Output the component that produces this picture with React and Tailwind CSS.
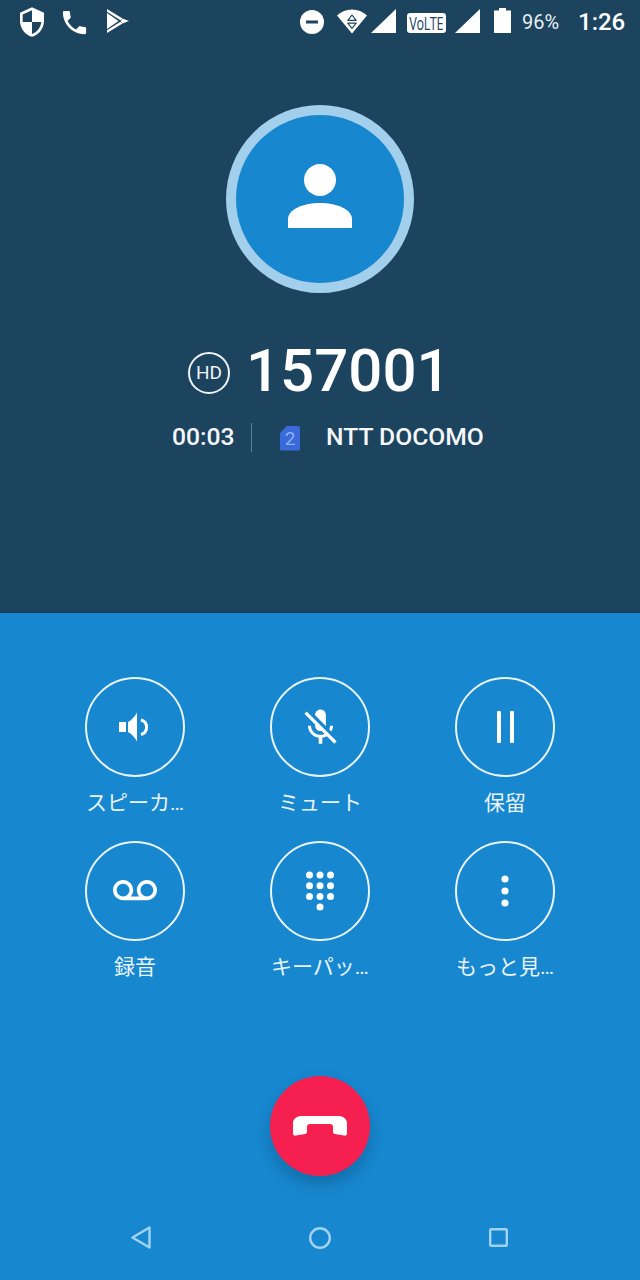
const cjk = { fontFamily: 'Roboto, "Noto Sans CJK JP", sans-serif' };
const dark = '#1c445f';

function StatusBar() {
  return (
    <div className="flex h-[44px] items-center text-white">
      <svg width="32" height="32" viewBox="0 0 24 24" className="ml-[16px]">
        <path fill="#fff" d="M12 1L3 5v6c0 5.55 3.84 10.74 9 12 5.16-1.26 9-6.45 9-12V5l-9-4zm0 10.99h7c-.53 4.12-3.28 7.79-7 8.94V12H5V6.3l7-3.11v8.8z" />
      </svg>
      <svg width="31" height="31" viewBox="0 0 24 24" className="ml-[11px]">
        <path fill="#fff" d="M6.62 10.79c1.44 2.83 3.76 5.14 6.59 6.59l2.2-2.2c.27-.27.67-.36 1.02-.24 1.12.37 2.33.57 3.57.57.55 0 1 .45 1 1V20c0 .55-.45 1-1 1-9.39 0-17-7.61-17-17 0-.55.45-1 1-1h3.5c.55 0 1 .45 1 1 0 1.25.2 2.45.57 3.57.11.35.03.74-.25 1.02l-2.2 2.2z" />
      </svg>
      <svg width="22" height="28" viewBox="0 0 22 28" className="ml-[17px]">
        <path fill="#fff" d="M0 1 L15.5 10.5 L13.4 12.2 L0 3.8 Z" />
        <path fill="#fff" d="M0 25 L15.5 15.5 L13.4 13.8 L0 22.2 Z" />
        <path fill="#fff" d="M0 5 L11.5 13 L0 21 Z" />
        <path fill="#fff" d="M15.5 10.5 L22 13 L15.5 15.5 L13.5 13 Z" />
      </svg>
      <div className="ml-auto flex items-center">
        <svg width="24" height="28" viewBox="0 0 24 28">
          <circle cx="12" cy="14" r="12" fill="#fff" />
          <rect x="6" y="12.5" width="12" height="3" fill={dark} />
        </svg>
        <svg width="30" height="28" viewBox="0 0 30 28" className="ml-[13px]">
          <path fill="#fff" d="M0 7.5 C8 -0.5 22 -0.5 30 7.5 L15 25.5 Z" />
          <path fill="none" stroke={dark} strokeWidth="1.2" strokeLinejoin="round" d="M15 7 L10.8 12.3 H19.2 Z M10.8 15.2 L15 20.5 L19.2 15.2 Z" />
        </svg>
        <svg width="25" height="28" viewBox="0 0 25 28" className="ml-[4px]">
          <path fill="#fff" d="M25 1 V25 H0 Z" />
        </svg>
        <div className="ml-[11px] mt-[2px] flex h-[20px] w-[39px] items-center justify-center rounded-[3px] bg-white">
          <span className="text-[18px] leading-none tracking-[-0.5px] text-[#1c445f]" style={{ fontFamily: '"Open Sans", sans-serif', transform: 'scaleX(0.7)' }}>VoLTE</span>
        </div>
        <svg width="25" height="28" viewBox="0 0 25 28" className="ml-[9px]">
          <path fill="#fff" d="M25 1 V25 H0 Z" />
        </svg>
        <svg width="17" height="28" viewBox="0 0 17 28" className="ml-[14px]">
          <path fill="#fff" d="M5 0 H12 V2.5 H17 V25 H0 V2.5 H5 Z" />
        </svg>
        <span className="ml-[11px] w-[38px] text-[20px] leading-none text-[#e8eef2]" style={{ fontFamily: 'Roboto, sans-serif' }}>96%</span>
        <span className="ml-[18px] mr-[15px] w-[47px] text-[24px] leading-none font-medium text-white" style={{ fontFamily: 'Roboto, sans-serif' }}>1:26</span>
      </div>
    </div>
  );
}
function Hero() {
  return (
    <section className="flex h-[613px] flex-col border-b border-[#17405a] bg-[#1c445f]" style={{ fontFamily: 'Roboto, sans-serif' }}>
      <StatusBar />
      <div className="mx-auto mt-[61px] flex h-[188px] w-[188px] items-center justify-center rounded-full border-[10px] border-[#a2cfec] bg-[#1787d0]">
        <svg width="64" height="64" viewBox="0 0 64 64" className="mb-[6px]">
          <circle cx="32" cy="16" r="16" fill="#fff" />
          <path fill="#fff" d="M0 64 V55 C0 46 14 39 32 39 C50 39 64 46 64 55 V64 Z" />
        </svg>
      </div>
      <div className="mt-[42px] flex h-[72px] items-center pl-[188px]">
        <div className="mt-[4px] flex h-[42px] w-[42px] items-center justify-center rounded-full border-2 border-[#eef3f6] text-[19px] font-normal text-[#eef3f6]">HD</div>
        <span className="ml-[16px] text-[60px] leading-none font-medium text-white">157001</span>
      </div>
      <div className="mt-[14px] flex h-[32px] items-center text-[24.7px] font-medium text-[#f5f7f9]">
        <span className="ml-[172px] w-[62px] leading-none">00:03</span>
        <div className="ml-[17px] h-[29px] w-[1px] bg-[#5e7f94]" />
        <div className="ml-[28px] mt-[2px] flex h-[25px] w-[20px] items-center justify-center rounded-[2px] bg-[#3a6ada] text-[19px] leading-none font-normal text-[#8eb1ef] [clip-path:polygon(35%_0,100%_0,100%_100%,0_100%,0_30%)]">2</div>
        <span className="ml-[26px] leading-none whitespace-nowrap">NTT DOCOMO</span>
      </div>
    </section>
  );
}

function CircleButton({ label, children }) {
  return (
    <div className="flex flex-col items-center">
      <div className="flex h-[100px] w-[100px] items-center justify-center rounded-full border-2 border-[#eaf4fb]">{children}</div>
      <div className="mt-[10px] h-[32px] text-[21px] leading-[32px] whitespace-nowrap text-[#eaf4fb]" style={cjk}>{label}</div>
    </div>
  );
}
function Controls() {
  return (
    <div className="mx-auto mt-[64px] grid w-[555px] grid-cols-3 gap-y-[22px]">
      <CircleButton label="スピーカ…">
        <svg width="34" height="30" viewBox="0 0 34 30">
          <rect x="1" y="10" width="7" height="10" fill="#fff" />
          <path fill="#fff" d="M10 10 C14 8 17 4 19 0.5 V29.5 C17 26 14 22 10 20 Z" />
          <path fill="none" stroke="#fff" strokeWidth="3" d="M23 8 A 7.5 7.5 0 0 1 23 22.5" />
        </svg>
      </CircleButton>
      <CircleButton label="ミュート">
        <svg width="43" height="43" viewBox="0 0 24 24">
          <path fill="#fff" d="M19 11h-1.7c0 .74-.16 1.43-.43 2.05l1.23 1.23c.56-.98.9-2.09.9-3.28zm-4.02.17c0-.06.02-.11.02-.17V5c0-1.66-1.34-3-3-3S9 3.34 9 5v.18l5.98 5.99zM4.27 3L3 4.27l6.01 6.01V11c0 1.66 1.33 3 2.99 3 .22 0 .44-.03.65-.08l1.66 1.66c-.71.33-1.5.52-2.31.52-2.76 0-5.3-2.1-5.3-5.1H5c0 3.41 2.72 6.23 6 6.72V21h2v-3.28c.91-.13 1.77-.45 2.54-.9L19.73 21 21 19.73 4.27 3z" />
        </svg>
      </CircleButton>
      <CircleButton label="保留">
        <div className="flex gap-[9px]">
          <div className="h-[32px] w-[4px] rounded-[1px] bg-white" />
          <div className="h-[32px] w-[4px] rounded-[1px] bg-white" />
        </div>
      </CircleButton>
      <CircleButton label="録音">
        <svg width="44" height="44" viewBox="0 0 24 24">
          <path fill="#fff" d="M18.5 6C15.46 6 13 8.46 13 11.5c0 1.33.47 2.55 1.26 3.5H9.74c.79-.95 1.26-2.17 1.26-3.5C11 8.46 8.54 6 5.5 6S0 8.46 0 11.5 2.46 17 5.5 17h13c3.04 0 5.5-2.46 5.5-5.5S21.54 6 18.5 6zm-13 9C3.57 15 2 13.43 2 11.5S3.57 8 5.5 8 9 9.57 9 11.5 7.43 15 5.5 15zm13 0c-1.93 0-3.5-1.57-3.5-3.5S16.57 8 18.5 8 22 9.57 22 11.5 20.43 15 18.5 15z" />
        </svg>
      </CircleButton>
      <CircleButton label="キーパッ…">
        <svg width="30" height="40" viewBox="0 0 30 40">
          {[0, 1, 2].flatMap((r) => [0, 1, 2].map((c) => <circle key={`${r}-${c}`} cx={4.5 + c * 10.5} cy={4 + r * 10.7} r="3.5" fill="#fff" />))}
          <circle cx="15" cy="36" r="3.5" fill="#fff" />
        </svg>
      </CircleButton>
      <CircleButton label="もっと見…">
        <svg width="8" height="32" viewBox="0 0 8 32">
          {[4, 16, 28].map((y) => <circle key={y} cx="4" cy={y} r="3.6" fill="#fff" />)}
        </svg>
      </CircleButton>
    </div>
  );
}
function Panel() {
  return (
    <section className="flex h-[667px] flex-col bg-[#1787d0]">
      <Controls />
      <div className="mx-auto mt-[93px] flex h-[100px] w-[100px] items-center justify-center rounded-full bg-[#f5204f] shadow-[0_8px_16px_rgba(0,0,0,0.2)]">
        <svg width="54" height="20" viewBox="0 0 54 20">
          <path fill="#fff" d="M0 7 C0 3 4 0 8 0 H46 C50 0 54 3 54 7 V17 C54 19 53 20 51 19.5 L42 18 C40.5 18 40 17 40 15 V11 C40 9 39 8 37 8 H17 C15 8 14 9 14 11 V15 C14 17 13.5 18 12 18 L3 19.5 C1 20 0 19 0 17 Z" />
        </svg>
      </div>
      <div className="mt-[50px] flex items-center justify-between pl-[131px] pr-[132px]">
        <svg width="20" height="23" viewBox="0 0 20 23">
          <path fill="none" stroke="#a2d3f2" strokeWidth="2.4" strokeLinejoin="round" d="M18.5 1.5 V21.5 L1.5 11.5 Z" />
        </svg>
        <svg width="22" height="22" viewBox="0 0 22 22">
          <circle cx="11" cy="11" r="9.8" fill="none" stroke="#a2d3f2" strokeWidth="2.4" />
        </svg>
        <svg width="19" height="19" viewBox="0 0 19 19">
          <rect x="1.2" y="1.2" width="16.6" height="16.6" rx="1" fill="none" stroke="#a2d3f2" strokeWidth="2.4" />
        </svg>
      </div>
    </section>
  );
}
export default function App() {
  return (
    <div className="h-[1280px] w-[640px] overflow-hidden">
      <Hero />
      <Panel />
    </div>
  );
}
